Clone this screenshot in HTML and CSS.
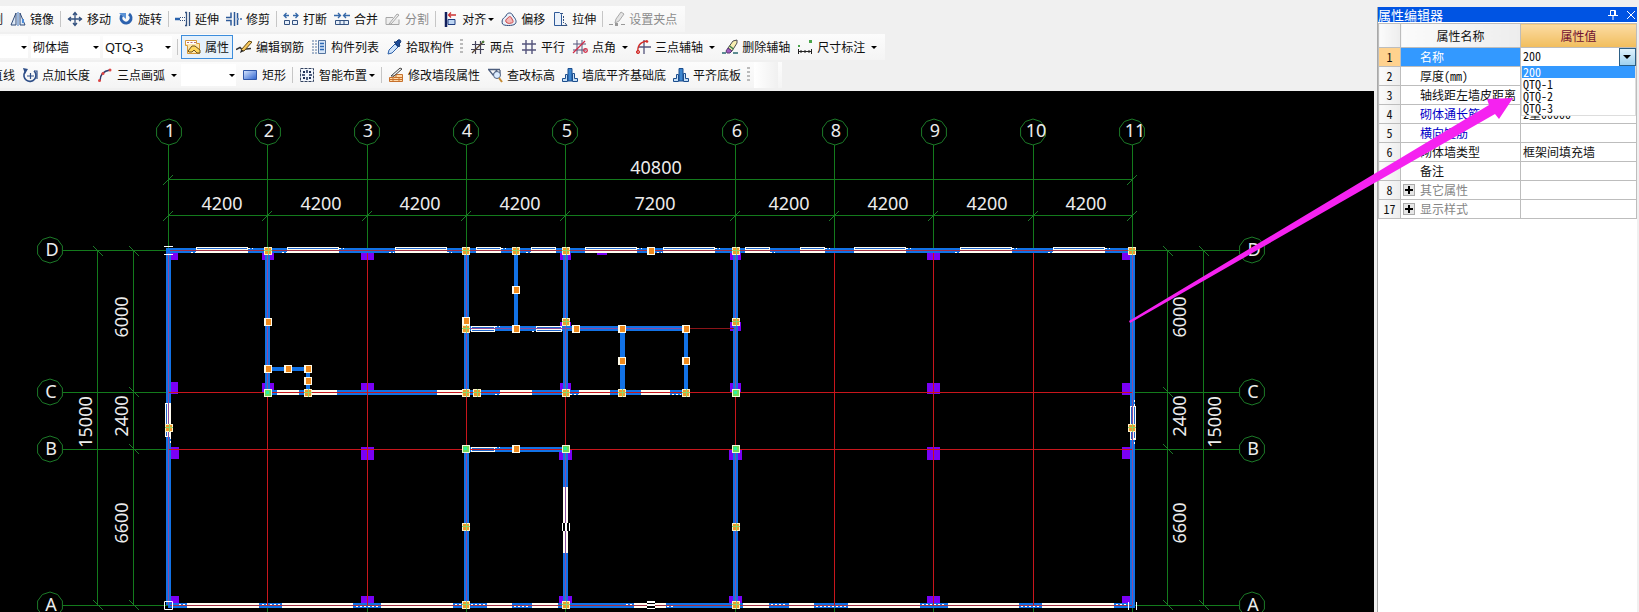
FILE: index.html
```html
<!DOCTYPE html>
<html lang="zh-CN">
<head>
<meta charset="utf-8">
<title>砌体墙 - 属性编辑器</title>
<link rel="stylesheet" href="styles.css">
</head>
<body>
<svg class="defs" width="0" height="0" aria-hidden="true">
  <defs>
    <symbol id="i-mirror" viewBox="0 0 16 16"><path d="M6 2v12H1zM10 2v12h5z" fill="#dfe9f5" stroke="#2f4a78"/><path d="M8 1v14" stroke="#3d74c0" stroke-width="1"/><path d="M13 8v4" stroke="#4c8bd8" stroke-width="2"/></symbol>
    <symbol id="i-move" viewBox="0 0 16 16"><path d="M8 1v14M1 8h14M6 4l2-2.500L10 4M6 12l2 2.500L10 12M4 6L1.500 8 4 10M12 6l2.500 2L12 10" fill="none" stroke="#33517f" stroke-width="1.300"/></symbol>
    <symbol id="i-rotate" viewBox="0 0 16 16"><path d="M4 4a5 5 0 1 0 7-1" fill="none" stroke="#2c62ae" stroke-width="3"/><path d="M1 2h7v6z" fill="#5c93d6"/></symbol>
    <symbol id="i-extend" viewBox="0 0 16 16"><path d="M0 8h5" stroke="#2a63ad" stroke-width="2.500"/><path d="M5 6.500h6M5 9.500h6" stroke="#33517f" stroke-dasharray="1 1"/><path d="M10 1.500h1.500v13H10M14.500 1v14" fill="none" stroke="#33517f" stroke-width="1.300"/></symbol>
    <symbol id="i-trim" viewBox="0 0 16 16"><path d="M0 6.500h5v-5M0 9.500h5v5M8.500 1v14M11.500 2v12" fill="none" stroke="#2d5a99" stroke-width="1.500"/><path d="M11 8h5" stroke="#6b8fc0" stroke-width="2" stroke-dasharray="2 1"/></symbol>
    <symbol id="i-break" viewBox="0 0 16 16"><path d="M1 4.500h5M10 4.500h5M3.500 2L1 4.500 3.500 7M12.500 2L15 4.500 12.500 7" fill="none" stroke="#3568a8" stroke-width="1.300"/><path d="M1.500 9.500h5v4h-5zM9.500 9.500h5v4h-5z" fill="#e5eef9" stroke="#33517f"/></symbol>
    <symbol id="i-merge" viewBox="0 0 16 16"><path d="M0 4.500h6M10 4.500h6M4 2l2.500 2.500L4 7M12 2L9.500 4.500 12 7" fill="none" stroke="#3568a8" stroke-width="1.300"/><path d="M1.500 9.500h13v4h-13zM6 9.500v4M10 9.500v4" fill="#e5eef9" stroke="#33517f"/></symbol>
    <symbol id="i-split" viewBox="0 0 16 16"><path d="M1 6.500h7M1 6.500v7h13v-5M4 13l8-10 2 1-8 9z" fill="#eee" stroke="#a6a6a6"/></symbol>
    <symbol id="i-align" viewBox="0 0 16 16"><path d="M4 1v15" stroke="#111f5c" stroke-width="2.500"/><path d="M14 4H7M9 1.500L6.500 4 9 6.500" fill="none" stroke="#c33" stroke-width="1.300"/><path d="M6 8.500h7v5H6z" fill="#bcd4f2" stroke="#1f3c80"/></symbol>
    <symbol id="i-offset" viewBox="0 0 16 16"><path d="M1.500 13C0 8 3 7 5 5c1-4 6-4 7 0 3 3 4 6 2 8-2 2-11 2-12.500 0z" fill="#eaf1fa" stroke="#2f4a78"/><path d="M5 11c-1-3 1-3 2-4 1-2 3-2 4 1 2 3 1 4-1 4-2 1-4 0-5-1z" fill="#f4b9b9" stroke="#c44"/></symbol>
    <symbol id="i-stretch" viewBox="0 0 16 16"><path d="M2.500 1.500h5l2 2v11h-7z" fill="#eaf1fa" stroke="#2f5a99"/><path d="M9 2.500h2M11.500 5v7" stroke="#33517f" stroke-dasharray="2 1"/><path d="M9 14.500h6M13 12l2 2.500" stroke="#33517f"/></symbol>
    <symbol id="i-grip" viewBox="0 0 16 16"><path d="M6 12l1-4 5-7 3 2-5 7z" fill="#e4e4e4" stroke="#aaa"/><path d="M0 13.500h4M12 13.500h4" stroke="#999"/><path d="M6 12h3v3H6z" fill="#999"/></symbol>
    <symbol id="i-prop" viewBox="0 0 16 16"><path d="M.500 1.500h11v3h3v10H2.500v-8h-2z" fill="#ffe7ad" stroke="#d79a38"/><path d="M1 2h10v3H1z" fill="#fff"/><path d="M2 3.500h2M5.500 3.500h2M9 3.500h2" stroke="#b4707a"/><path d="M3 12l4-5h3l5 4v3h-3l-3-3-2 2H4z" fill="#ffd75e" stroke="#6b5320"/></symbol>
    <symbol id="i-rebar" viewBox="0 0 16 16"><path d="M0 10.500l4-2 2 2 9-1" fill="none" stroke="#333" stroke-width="1.500"/><path d="M5 11l8-9 3 1-8 9z" fill="#f6c65b" stroke="#634a16"/><path d="M5 11l-1 3 4-2z" fill="#222"/></symbol>
    <symbol id="i-list" viewBox="0 0 16 16"><path d="M1 2h5M1 5h5M1 8h5M1 11h5M1 14h5" stroke="#55749f" stroke-dasharray="2 1"/><path d="M7.500 1.500h7v13h-7z" fill="#d9e7f8" stroke="#54749f"/><path d="M9 4.500h4M9 7.500h4M9 10.500h4" stroke="#2c68b5" stroke-width="1.500"/></symbol>
    <symbol id="i-pick" viewBox="0 0 16 16"><path d="M2 15l1-4 6-6 3 3-6 6z" fill="#cfe3fa" stroke="#2b5fa8"/><path d="M8 3l5 5 1-2-1-1c3-2 2-5-1-4l-2 2z" fill="#1d4b99" stroke="#15386f"/></symbol>
    <symbol id="i-two" viewBox="0 0 16 16"><path d="M5.500 2v13M10.500 2v13M2 5.500h13M1 10.500h13" stroke="#44445c" stroke-width="1.200"/><path d="M2 14L14 2" stroke="#5c4630" stroke-width="1.300"/><circle cx="13" cy="3" r="1.300" fill="#4b7b3b"/></symbol>
    <symbol id="i-par" viewBox="0 0 16 16"><path d="M5 1v14M11 1v14M1 5h14M1 11h14" stroke="#54547c" stroke-width="1.400"/></symbol>
    <symbol id="i-angle" viewBox="0 0 16 16"><path d="M5 1v14M10 1v14M1 5h13M1 11h13" stroke="#54547c"/><path d="M1 14L13 2" stroke="#d22c48" stroke-width="1.300"/><circle cx="13.500" cy="11.500" r="1.800" fill="none" stroke="#d22c48" stroke-width="1.300"/></symbol>
    <symbol id="i-arcax" viewBox="0 0 16 16"><path d="M9 1v14M3 8h13" stroke="#54547c" stroke-width="1.300"/><path d="M3 14C2 7 5 3 12 2" fill="none" stroke="#d22c28" stroke-width="1.300"/><circle cx="3" cy="13" r="1.600" fill="none" stroke="#d22c28"/><circle cx="12" cy="2.500" r="1.300" fill="#d22c28"/></symbol>
    <symbol id="i-erase" viewBox="0 0 16 16"><path d="M6 9l5-7 4-1v3l-5 8z" fill="#f6eeb0" stroke="#4d4d50"/><path d="M6 9l4 3-2 2H5l-1-2z" fill="#a15bc0" stroke="#553a70"/><path d="M7.500 7l4 3" stroke="#3a7a4a" stroke-width="1.500"/><path d="M0 14h4M11 14h5" stroke="#2a6a70" stroke-width="1.500"/></symbol>
    <symbol id="i-dim" viewBox="0 0 16 16"><path d="M1 6h2v2H1zM12 1h3v3h-3z" fill="#4aa64a"/><path d="M1.500 10v5M14.500 10v5M2 12.500h12M4 11v3M12 11v3M8 11v3" stroke="#222"/></symbol>
    <symbol id="i-len" viewBox="0 0 16 16"><path d="M3 5a6 6 0 1 0 9-1" fill="none" stroke="#2f4f88" stroke-width="1.600"/><path d="M1 1l5 1-3 5z" fill="#2f4f88"/><path d="M5 9h7M8.500 6v6M12 4h3v8" fill="none" stroke="#2f4f88" stroke-width="1.200"/></symbol>
    <symbol id="i-arc" viewBox="0 0 16 16"><path d="M3 14C3 8 6 4 13 3" fill="none" stroke="#333c6a" stroke-width="1.500"/><circle cx="2.500" cy="13.500" r="1.500" fill="#d44"/><circle cx="6" cy="6.500" r="1.500" fill="#d44"/><circle cx="13" cy="3" r="1.500" fill="#d44"/></symbol>
    <linearGradient id="blue" x1="0" y1="0" x2="1" y2="1"><stop offset="0" stop-color="#dbe9ff"/><stop offset="1" stop-color="#2c62cf"/></linearGradient>
    <symbol id="i-rect" viewBox="0 0 16 16"><path d="M1.500 3.500h13v9h-13z" fill="url(#blue)" stroke="#3158a8"/></symbol>
    <symbol id="i-smart" viewBox="0 0 16 16"><path d="M1.500 1.500h13v13h-13z" fill="#f2f6fc" stroke="#33425f" stroke-dasharray="3 1"/><path d="M8 3v3M8 10v3M3 8h3M10 8h3" stroke="#1d2f55" stroke-width="1.500"/><path d="M4 4h2v2H4zM10 4h2v2h-2zM4 10h2v2H4zM10 10h2v2h-2z" fill="#1d2f55"/></symbol>
    <symbol id="i-wall" viewBox="0 0 16 16"><path d="M1.500 10.500h4v-3h9v7h-13z" fill="#ffd9a8" stroke="#c7702b"/><path d="M2 12.500h12M6 10.500h8M8 8v3M5 11v3M11 10v4" stroke="#c7702b"/><path d="M3 9l9-8 2 1-8 7z" fill="#eee" stroke="#444"/></symbol>
    <symbol id="i-level" viewBox="0 0 16 16"><path d="M1 2.500h12M2 3l4 5 4-5M13 3v4" fill="none" stroke="#4d5e7e" stroke-width="1.300"/><circle cx="10" cy="8" r="3.500" fill="#dcecff" stroke="#50617f"/><path d="M12 11l3 4" stroke="#c58a32" stroke-width="2"/></symbol>
    <symbol id="i-base" viewBox="0 0 16 16"><path d="M6 14V1.500h4V14z" fill="#3d86cf" stroke="#1b4d8d"/><path d="M.500 14.500v-3h3v-4h2v7zM15.500 14.500v-3h-3v-5h-2v8z" fill="#c4def6" stroke="#1b4d8d"/></symbol>
    <symbol id="bub" viewBox="-14 -14 28 28" overflow="visible"><path d="M0-13L7.600-10.500L12.400-4V4L7.600 10.500L0 13L-7.600 10.500L-12.400 4V-4L-7.600-10.500Z" fill="none" stroke="#1c7a28"/></symbol>
    <g id="g"><path d="M-4-4h8v8h-8z" fill="#fffbe8"/><path d="M-2-3h5v6h-5z" fill="#f08a1c"/></g>
    <g id="gx"><path d="M-4-4h8v8h-8z" fill="#fff0c4"/><path d="M-3-3h6v6h-6z" fill="#ee9a2a"/><path d="M.500-4v8M-4-.500h8" stroke="#8fd66a"/></g>
    <g id="gg"><path d="M-4-4h8v8h-8z" fill="#eefbd8"/><path d="M-3-3h6v6h-6z" fill="#6fd85a"/><path d="M-2-2h3v3h-3z" fill="#2cf0a0"/></g>
    <g id="gw"><path d="M-4-4h8v8h-8z" fill="#fff"/><path d="M-4-2h8v1h-8zM-4 1h8v2h-8z" fill="#000"/></g>
    <g id="gv"><path d="M-4-4h8v8h-8z" fill="#fff"/><path d="M-3-4h2v8h-2zM1-4h2v8h-2z" fill="#000"/></g>
    <path id="tk" d="M-5 5L5-5" stroke="#1c7a28"/>
    <path id="tv" d="M-5-5L5 5" stroke="#1c7a28"/>
  </defs>
</svg>

<div class="app">
  <header class="toolbars">
    <div class="bar">
      <button class="tool clipped c-short">割</button>
      <button class="tool"><svg><use href="#i-mirror"/></svg>镜像</button><i class="sep"></i>
      <button class="tool"><svg><use href="#i-move"/></svg>移动</button>
      <button class="tool"><svg><use href="#i-rotate"/></svg>旋转</button><i class="sep"></i>
      <button class="tool"><svg><use href="#i-extend"/></svg>延伸</button>
      <button class="tool"><svg><use href="#i-trim"/></svg>修剪</button><i class="sep"></i>
      <button class="tool"><svg><use href="#i-break"/></svg>打断</button>
      <button class="tool"><svg><use href="#i-merge"/></svg>合并</button>
      <button class="tool" disabled><svg><use href="#i-split"/></svg>分割</button><i class="sep"></i>
      <button class="tool"><svg><use href="#i-align"/></svg>对齐<b class="caret tight"></b></button>
      <button class="tool"><svg><use href="#i-offset"/></svg>偏移</button>
      <button class="tool"><svg><use href="#i-stretch"/></svg>拉伸</button><i class="sep"></i>
      <button class="tool" disabled><svg><use href="#i-grip"/></svg>设置夹点</button>
    </div>
    <div class="bar">
      <label class="combo w-a"><select aria-label="类别"><option></option></select><b class="caret"></b></label>
      <label class="combo w-b"><select aria-label="构件类型"><option>砌体墙</option></select><b class="caret"></b></label>
      <label class="combo w-b latin"><select aria-label="构件"><option>QTQ-3</option></select><b class="caret"></b></label>
      <i class="sep"></i>
      <button class="tool active"><svg><use href="#i-prop"/></svg>属性</button>
      <button class="tool"><svg><use href="#i-rebar"/></svg>编辑钢筋</button>
      <button class="tool"><svg><use href="#i-list"/></svg>构件列表</button>
      <button class="tool"><svg><use href="#i-pick"/></svg>拾取构件</button>
      <i class="grip"></i>
      <button class="tool"><svg><use href="#i-two"/></svg>两点</button>
      <button class="tool"><svg><use href="#i-par"/></svg>平行</button>
      <button class="tool"><svg><use href="#i-angle"/></svg>点角<b class="caret"></b></button>
      <button class="tool"><svg><use href="#i-arcax"/></svg>三点辅轴<b class="caret"></b></button>
      <button class="tool"><svg><use href="#i-erase"/></svg>删除辅轴</button>
      <button class="tool"><svg><use href="#i-dim"/></svg>尺寸标注<b class="caret"></b></button>
    </div>
    <div class="bar">
      <button class="tool clipped c-long">直线</button>
      <button class="tool"><svg><use href="#i-len"/></svg>点加长度</button>
      <button class="tool"><svg><use href="#i-arc"/></svg>三点画弧<b class="caret"></b></button>
      <label class="combo w-c"><select aria-label="画弧半径"><option></option></select><b class="caret"></b></label>
      <button class="tool"><svg><use href="#i-rect"/></svg>矩形</button><i class="sep"></i>
      <button class="tool"><svg><use href="#i-smart"/></svg>智能布置<b class="caret tight"></b></button><i class="sep"></i>
      <button class="tool"><svg><use href="#i-wall"/></svg>修改墙段属性</button>
      <button class="tool"><svg><use href="#i-level"/></svg>查改标高</button>
      <button class="tool"><svg><use href="#i-base"/></svg>墙底平齐基础底</button>
      <button class="tool"><svg><use href="#i-base"/></svg>平齐底板</button>
      <i class="grip"></i><span class="stub"></span>
    </div>
  </header>

  <main class="canvas">
    <svg viewBox="0 91 1374 521" preserveAspectRatio="xMinYMin meet" role="img" aria-label="砌体墙平面图">
      <g fill="#7a00f5">
        <path d="M170 251h8v9h-8zM262 253h12v7h-12zM361 252h13v8h-13zM560 251h11v9h-11zM597 251h10v4h-10zM730 251h11v9h-11zM927 252h13v8h-13zM1122 251h8v9h-8z"/>
        <path d="M170 382h8v12h-8zM262 383h12v9h-12zM361 383h13v11h-13zM560 383h11v9h-11zM730 383h11v9h-11zM927 383h13v11h-13zM1122 383h8v12h-8z"/>
        <path d="M171 447h8v12h-8zM361 447h13v13h-13zM559 449h13v11h-13zM729 449h13v11h-13zM927 447h13v13h-13zM1122 447h8v12h-8z"/>
        <path d="M171 596h8v9h-8zM361 596h13v9h-13zM559 596h13v9h-13zM729 596h13v9h-13zM927 596h13v9h-13zM1122 596h8v9h-8z"/>
        <path d="M560 322h11v6h-11zM730 322h11v9h-11z"/>
      </g>
      <g stroke="#137a1c" fill="none" shape-rendering="crispEdges">
        <path d="M168.500 145v105M267.500 145v105M367.500 145v105M466.500 145v105M565.500 145v105M735.500 145v105M834.500 145v105M933.500 145v105M1033.500 145v105M1132.500 145v105"/>
        <path d="M168 179.500h965M168 215.500h965M63 250.500h105M63 392.500h105M63 449.500h105M63 605.500h105M1132 250.500h107M1132 392.500h107M1132 449.500h107M1132 605.500h107"/>
        <path d="M97.500 250v356M133.500 250v356M1167.500 250v356M1203.500 250v356M267.500 606v6M367.500 606v6M466.500 606v6M565.500 606v6M735.500 606v6M834.500 606v6M933.500 606v6M1033.500 606v6M1132.500 606v6"/>
      </g>
      <g>
        <use href="#tk" x="168" y="180"/><use href="#tk" x="1132" y="180"/>
        <use href="#tk" x="168" y="216"/><use href="#tk" x="267" y="216"/><use href="#tk" x="367" y="216"/><use href="#tk" x="466" y="216"/><use href="#tk" x="565" y="216"/><use href="#tk" x="735" y="216"/><use href="#tk" x="834" y="216"/><use href="#tk" x="933" y="216"/><use href="#tk" x="1033" y="216"/><use href="#tk" x="1132" y="216"/>
        <use href="#tv" x="98" y="251"/><use href="#tv" x="134" y="251"/><use href="#tv" x="134" y="392"/><use href="#tv" x="134" y="449"/><use href="#tv" x="98" y="605"/><use href="#tv" x="134" y="605"/>
        <use href="#tv" x="1168" y="251"/><use href="#tv" x="1204" y="251"/><use href="#tv" x="1168" y="392"/><use href="#tv" x="1168" y="449"/><use href="#tv" x="1168" y="605"/><use href="#tv" x="1204" y="605"/>
      </g>
      <g fill="#1272e6">
        <path d="M166 248h5v357h-5zM265 250h5v143h-5zM464 250h5v143h-5zM464 449h5v157h-5zM514 252h4v76h-4zM563 250h5v143h-5zM563 449h5v157h-5zM733 250h5v143h-5zM733 449h5v157h-5zM1130 250h5v357h-5zM620 328h5v65h-5zM684 328h4v65h-4z"/>
        <path d="M166 248h969v5H166zM466 326h220v5H466zM268 367h40v4h-40zM306 369h4v24h-4zM267 390h419v5H267zM466 447h99v5h-99zM168 603h967v5H168z"/>
      </g>
      <g fill="#fffdf2">
        <path d="M196 247h52v6h-52zM287 247h52v6h-52zM395 247h52v6h-52zM476 247h25v6h-25zM531 247h25v6h-25zM585 247h52v6h-52zM663 247h52v6h-52zM745 247h25v6h-25zM800 247h25v6h-25zM854 247h52v6h-52zM960 247h52v6h-52zM1053 247h52v6h-52z"/>
        <path d="M471 326h24v6h-24zM536 326h26v6h-26zM277 390h22v5h-22zM308 390h29v5h-29zM437 390h27v5h-27zM500 390h32v5h-32zM579 390h31v5h-31zM641 390h29v5h-29zM471 447h24v5h-24z"/>
        <path d="M187 603h72v5h-72zM282 603h71v5h-71zM381 603h72v5h-72zM487 603h25v5h-25zM532 603h26v5h-26zM634 603h32v5h-32zM743 603h26v5h-26zM789 603h25v5h-25zM848 603h72v5h-72zM948 603h71v5h-71zM1042 603h72v5h-72z"/>
        <path d="M165 403h6v34h-6zM563 487h5v66h-5zM1130 406h6v34h-6z"/>
      </g>
      <g stroke="#1f66cc" shape-rendering="crispEdges">
        <path d="M197 248.500h50M288 248.500h50M396 248.500h50M477 248.500h23M532 248.500h23M586 248.500h50M664 248.500h50M746 248.500h23M801 248.500h23M855 248.500h50M961 248.500h50M1054 248.500h50M472 327.500h22M472 330.500h22M537 327.500h24M537 330.500h24M472 448.500h22M472 450.500h22M166.500 404v32M1131.500 407v32M1134.500 407v32"/>
      </g>
      <g stroke="#fff" stroke-dasharray="2 2" shape-rendering="crispEdges">
        <path d="M191 252.500h5M248 248.500h5M282 252.500h5M339 248.500h5M389 252.500h5M447 252.500h5M501 248.500h5M526 252.500h5M637 248.500h5M657 252.500h5M715 248.500h5M770 252.500h5M825 248.500h5M906 248.500h5M955 252.500h5M1012 248.500h5M1048 252.500h5M1105 248.500h5"/>
        <path d="M495 326.500h5M532 331.500h5M495 394.500h5M495 447.500h5M337 392.500h6M570 394.500h9M672 394.500h9M179 604.500h8M262 604.500h18M356 606.500h22M455 604.500h30M514 606.500h16M626 604.500h8M667 606.500h6M771 604.500h16M816 606.500h30M922 604.500h24M1021 606.500h19M1116 604.500h12M170.500 437v6M1134.500 400v6M1134.500 438v6M565.500 482v5M565.500 553v5"/>
      </g>
      <g stroke="#c8161c" shape-rendering="crispEdges">
        <path d="M267.500 393v212M367.500 253v352M466.500 393v56M565.500 393v56M735.500 393v56M834.500 253v352M933.500 253v352M1033.500 253v352M168 392.500h965M168 449.500h965"/>
        <path d="M688 328.500h46" stroke="#8a1418"/>
        <path d="M170 250.500h962M170 605.500h962" stroke="#a33046"/>
      </g>
      <g stroke="#8a4a9e" shape-rendering="crispEdges">
        <path d="M168.500 253v352M267.500 253v139M466.500 253v139M466.500 449v156M565.500 253v139M735.500 253v139M735.500 449v156M1132.500 253v352M565.500 449v156M466 328.500h220"/>
      </g>
      <g fill="none" stroke="#fff"><path d="M164.500 601.500h8v8h-8zM164 246.500h9M164 254.500h9M1128.500 602v8M1136.500 602v8"/></g>
      <g>
        <use href="#gx" x="268" y="251"/><use href="#gx" x="466" y="251"/><use href="#gx" x="516" y="251"/><use href="#gx" x="566" y="251"/><use href="#g" x="651" y="251"/><use href="#gx" x="736" y="251"/><use href="#gx" x="1132" y="251"/>
        <use href="#g" x="268" y="322"/><use href="#g" x="516" y="290"/><use href="#g" x="466" y="321"/><use href="#gx" x="566" y="322"/><use href="#gx" x="736" y="322"/>
        <use href="#gx" x="466" y="329"/><use href="#g" x="516" y="329"/><use href="#g" x="576" y="329"/><use href="#g" x="622" y="329"/><use href="#g" x="686" y="329"/><use href="#g" x="622" y="361"/><use href="#g" x="686" y="361"/>
        <use href="#g" x="268" y="369"/><use href="#g" x="288" y="369"/><use href="#g" x="308" y="369"/><use href="#g" x="308" y="381"/>
        <use href="#gg" x="268" y="393"/><use href="#gx" x="308" y="393"/><use href="#gx" x="466" y="393"/><use href="#gx" x="477" y="393"/><use href="#gx" x="566" y="393"/><use href="#gx" x="622" y="393"/><use href="#gx" x="686" y="393"/><use href="#gg" x="736" y="393"/>
        <use href="#gg" x="466" y="449"/><use href="#g" x="516" y="449"/><use href="#gg" x="566" y="449"/><use href="#gg" x="736" y="449"/>
        <use href="#gx" x="466" y="527"/><use href="#gv" x="566" y="527"/><use href="#gx" x="736" y="527"/><use href="#gx" x="169" y="428"/><use href="#gx" x="1132" y="428"/>
        <use href="#gx" x="466" y="605"/><use href="#gx" x="566" y="605"/><use href="#gw" x="651" y="605"/><use href="#gx" x="736" y="605"/>
      </g>
      <g>
        <use href="#bub" x="155" y="118" width="28" height="28"/><use href="#bub" x="254" y="118" width="28" height="28"/><use href="#bub" x="353" y="118" width="28" height="28"/><use href="#bub" x="452" y="118" width="28" height="28"/><use href="#bub" x="551" y="118" width="28" height="28"/><use href="#bub" x="721" y="118" width="28" height="28"/><use href="#bub" x="821" y="118" width="28" height="28"/><use href="#bub" x="920" y="118" width="28" height="28"/><use href="#bub" x="1019" y="118" width="28" height="28"/><use href="#bub" x="1118" y="118" width="28" height="28"/>
        <use href="#bub" x="36" y="236" width="28" height="28"/><use href="#bub" x="36" y="378" width="28" height="28"/><use href="#bub" x="36" y="435" width="28" height="28"/><use href="#bub" x="36" y="591" width="28" height="28"/>
        <use href="#bub" x="1238" y="236" width="28" height="28"/><use href="#bub" x="1238" y="378" width="28" height="28"/><use href="#bub" x="1238" y="435" width="28" height="28"/><use href="#bub" x="1238" y="591" width="28" height="28"/>
      </g>
      <g class="dims">
        <text x="170" y="137">1</text><text x="269" y="137">2</text><text x="368" y="137">3</text><text x="467" y="137">4</text><text x="567" y="137">5</text><text x="737" y="137">6</text><text x="836" y="137">8</text><text x="935" y="137">9</text><text x="1036" y="137">10</text><text x="1135" y="137">11</text>
        <text x="656" y="174">40800</text>
        <text x="222" y="210">4200</text><text x="321" y="210">4200</text><text x="420" y="210">4200</text><text x="520" y="210">4200</text><text x="655" y="210">7200</text><text x="789" y="210">4200</text><text x="888" y="210">4200</text><text x="987" y="210">4200</text><text x="1086" y="210">4200</text>
        <text x="52" y="256">D</text><text x="51" y="398">C</text><text x="51" y="455">B</text><text x="51" y="611">A</text>
        <text x="1254" y="256">D</text><text x="1253" y="398">C</text><text x="1253" y="455">B</text><text x="1253" y="611">A</text>
        <text transform="translate(128 317) rotate(-90)">6000</text><text transform="translate(128 416) rotate(-90)">2400</text><text transform="translate(92 422) rotate(-90)">15000</text><text transform="translate(128 523) rotate(-90)">6600</text>
        <text transform="translate(1186 317) rotate(-90)">6000</text><text transform="translate(1186 416) rotate(-90)">2400</text><text transform="translate(1221 422) rotate(-90)">15000</text><text transform="translate(1186 523) rotate(-90)">6600</text>
      </g>
    </svg>
  </main>

  <aside class="panel">
    <div class="title"><h1>属性编辑器</h1>
      <button aria-label="固定"><svg viewBox="0 0 12 12"><path d="M3.500 1.500h5v5h-5zM7.500 2v4M1 6.500h10M6 7v4" fill="none" stroke="#fff"/></svg></button>
      <button aria-label="关闭"><svg viewBox="0 0 12 12"><path d="M2 2l8 8M10 2l-8 8" stroke="#fff"/></svg></button>
    </div>
    <table>
      <colgroup><col class="col-n"><col class="col-name"><col></colgroup>
      <thead><tr><th></th><th>属性名称</th><th class="hot">属性值</th></tr></thead>
      <tbody>
        <tr class="sel"><th>1</th><td>名称</td><td class="edit">
          <div class="field"><select aria-label="名称"><option>200</option><option>QTQ-1</option><option>QTQ-2</option><option>QTQ-3</option></select><span class="drop"><b class="caret"></b></span></div>
          <ul class="list"><li class="on">200</li><li>QTQ-1</li><li>QTQ-2</li><li>QTQ-3</li></ul>
        </td></tr>
        <tr><th>2</th><td>厚度(mm)</td><td></td></tr>
        <tr><th>3</th><td>轴线距左墙皮距离</td><td></td></tr>
        <tr class="key"><th>4</th><td>砌体通长筋</td><td class="val">2量00000</td></tr>
        <tr class="key"><th>5</th><td>横向短筋</td><td></td></tr>
        <tr><th>6</th><td>砌体墙类型</td><td class="val">框架间填充墙</td></tr>
        <tr><th></th><td>备注</td><td></td></tr>
        <tr class="group"><th>8</th><td><button class="plus" aria-label="展开其它属性"></button>其它属性</td><td></td></tr>
        <tr class="group"><th>17</th><td><button class="plus" aria-label="展开显示样式"></button>显示样式</td><td></td></tr>
      </tbody>
    </table>
  </aside>

  <svg class="pointer" viewBox="1128 96 386 228" aria-hidden="true"><path d="M1129 321L1489 105L1487 99L1513 98L1499 119L1495 114L1130 323Z" fill="#f522f0"/></svg>
</div>
</body>
</html>
```
FILE: styles.css
```css
* { box-sizing: border-box; }

body {
  margin: 0;
  background: #f0f0f0;
  font: 12px/16px "Noto Sans CJK SC", sans-serif;
  color: #111;
}

button, select {
  margin: 0;
  border: 0;
  background: none;
  font: inherit;
  color: inherit;
  appearance: none;
}

h1, ul { margin: 0; padding: 0; }

.defs { position: absolute; }

.app {
  position: relative;
  display: grid;
  grid-template-columns: minmax(0, 1fr) 265px;
  grid-template-rows: auto 1fr;
  height: 100vh;
  overflow: hidden;
}

/* toolbars */
.toolbars {
  display: flex;
  flex-direction: column;
  align-items: flex-start;
  gap: 2px;
  padding: 6px 0 3px;
}

.bar {
  display: flex;
  align-items: center;
  height: 26px;
  padding-right: 4px;
  background: linear-gradient(#fcfcfc, #f4f4f4);
  white-space: nowrap;
}

.tool {
  display: flex;
  align-items: center;
  flex: none;
  height: 24px;
  padding: 0 4px 0 3px;
}

.tool svg {
  width: 16px;
  height: 16px;
  margin-right: 4px;
}

.tool:disabled { color: #8c8c8c; }

.tool.active {
  padding: 0 3px;
  border: 1px solid #3c8ddc;
  background: #e6f1fb;
}

.clipped {
  justify-content: flex-end;
  overflow: hidden;
  padding: 0 4px 0 0;
}

.c-short { width: 7px; }
.c-long { width: 19px; }

.caret {
  flex: none;
  margin: 0 1px 0 6px;
  border: 3px solid transparent;
  border-top-color: #000;
  border-bottom: 0;
}

.tool .caret { margin: 0 0 0 6px; }
.tool .caret.tight { margin-left: 2px; }

.sep {
  width: 1px;
  height: 16px;
  margin: 0 3px 0 2px;
  background: #c6c6c6;
}

.grip {
  width: 3px;
  height: 16px;
  margin: 0 4px 0 2px;
  background: repeating-linear-gradient(#bbb 0 2px, transparent 2px 4px);
}

.stub {
  width: 24px;
  height: 26px;
  background: linear-gradient(90deg, #fff, #f0f0f0);
}

.combo {
  display: flex;
  align-items: center;
  flex: none;
  height: 22px;
  margin-right: 3px;
  background: #fff;
}

.combo select {
  flex: 1;
  min-width: 0;
  padding: 0 2px;
}

.combo.latin {
  font-family: "Noto Sans", sans-serif;
  font-size: 13px;
}

.w-a { width: 28px; }
.w-b { width: 69px; }
.w-c { width: 55px; }

/* drawing area */
.canvas {
  grid-row: 2;
  min-height: 0;
  background: #000;
}

.canvas svg {
  display: block;
  width: 100%;
}

.dims {
  fill: #ececec;
  font: 18px "Noto Sans", sans-serif;
  text-anchor: middle;
}

/* property panel */
.panel {
  grid-column: 2;
  grid-row: 1 / 3;
  margin: 7px 2px 0 3px;
  border-left: 1px solid #a8a8a8;
  background: #fff;
  font-feature-settings: "hwid";
}

.title {
  display: flex;
  align-items: center;
  gap: 6px;
  height: 15px;
  margin-bottom: 1px;
  background: #0054e3;
  color: #fff;
}

.title h1 {
  flex: 1;
  font-size: 13px;
  font-weight: 400;
  line-height: 14px;
}

.title button {
  width: 12px;
  height: 12px;
  padding: 0;
}

.title svg { display: block; }

table {
  width: 100%;
  table-layout: fixed;
  border-collapse: collapse;
  line-height: 14px;
}

.col-n { width: 22px; }
.col-name { width: 120px; }

th, td {
  height: 19px;
  padding: 0;
  border: 1px solid #bdbdbd;
  text-align: left;
  font-weight: 400;
  white-space: nowrap;
}

th {
  background: linear-gradient(90deg, #fbfbfb, #ededed);
  text-align: center;
}

thead th { height: 24px; }

thead .hot {
  background: linear-gradient(#fbdca4, #f1bd5c);
  color: #701030;
}

td:nth-child(2) { padding-left: 19px; }
.val { padding-left: 2px; }

.sel th { background: #ffd28e; }
.sel td:nth-child(2) { background: #3399ff; color: #fff; }
.key td:nth-child(2) { color: #0000c8; }
.group td { color: #858585; }

.edit { position: relative; }

.field { display: flex; height: 18px; }

.field select {
  flex: 1;
  min-width: 0;
  padding: 0 2px 2px;
}

.drop {
  display: flex;
  align-items: center;
  width: 17px;
  border: 1px solid #2c5f86;
  background: linear-gradient(#e0f2fc, #9fd2f0);
}

.drop .caret {
  margin: 0 0 0 3px;
  border-width: 4px 4px 0;
}

.list {
  position: absolute;
  top: 18px;
  left: 0;
  right: 0;
  padding-bottom: 1px;
  border: 1px solid #ddd;
  border-top: 0;
  background: #fff;
  list-style: none;
  line-height: 12px;
}

.list li { padding-left: 1px; }
.list .on { background: #3399ff; color: #fff; }

.plus {
  float: left;
  width: 12px;
  height: 12px;
  margin: 1px 0 0 -17px;
  padding: 0;
  border: 1px solid #aaa;
  background:
    linear-gradient(#000, #000) center / 8px 2px no-repeat,
    linear-gradient(#000, #000) center / 2px 8px no-repeat,
    #e6e6e6;
}

/* callout arrow */
.pointer {
  position: absolute;
  top: 96px;
  right: 125px;
  width: 386px;
  height: 228px;
  pointer-events: none;
}
```
